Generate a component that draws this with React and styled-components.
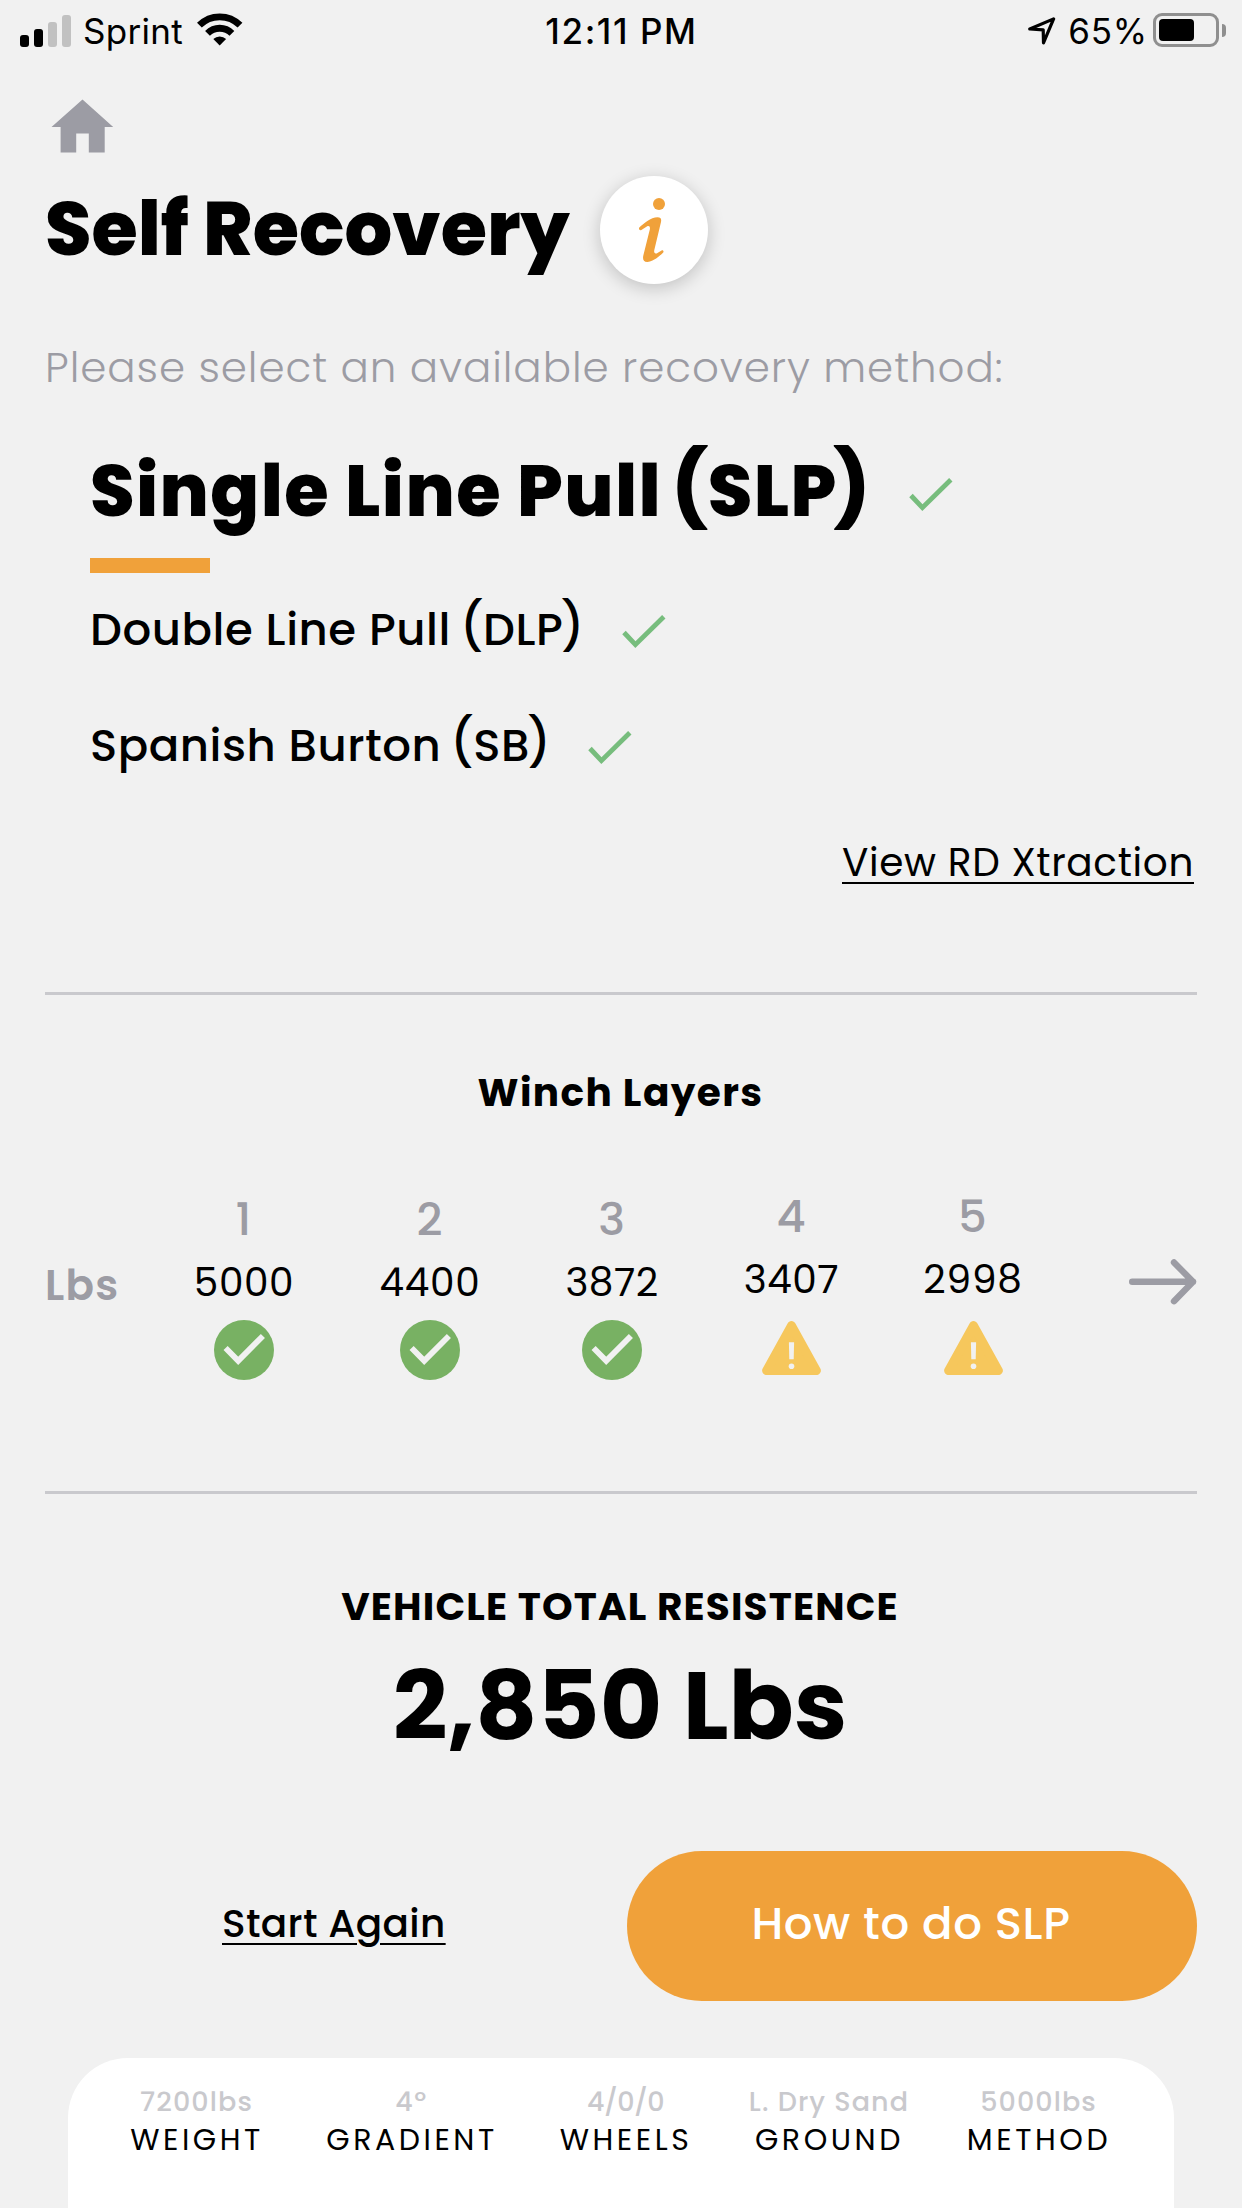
import styled, { createGlobalStyle, ThemeProvider } from 'styled-components'

const theme = {
    colors: {
        page: '#f1f1f1',
        font: '#000000',
        muted: '#9c9ca4',
        faint: '#c9c9cd',
        accent: '#f0a13a',
        tick: '#77bd7d',
        ok: '#78b163',
        warn: '#f6c75c',
    },
}

const GlobalStyle = createGlobalStyle`
    body {
        margin: 0;
        background: ${(props) => props.theme.colors.page};
        color: ${(props) => props.theme.colors.font};
        font-family: Poppins, 'Inter', sans-serif;
        font-feature-settings: 'cv11';
    }
`

const Screen = styled.div`
    display: flex;
    flex-direction: column;
    box-sizing: border-box;
    width: 1242px;
    height: 2208px;
    overflow: hidden;
`

/* text with its own tracking */
const Text = styled.span`
    letter-spacing: ${(props) => props.$track || 0}px;
    white-space: pre;
`

const StatusBar = styled.div`
    display: grid;
    grid-template-columns: 1fr auto 1fr;
    align-items: center;
    height: 62px;
    padding: 0 16px 0 20px;
    font-family: 'Inter', sans-serif;
    font-feature-settings: normal;
    font-size: 35px;
    line-height: 62px;
`

const StatusSide = styled.div`
    display: flex;
    align-items: center;
    justify-content: ${(props) => (props.$end ? 'flex-end' : 'flex-start')};
`

const Clock = styled(Text)`
    padding-right: 3px;
    font-weight: 500;
`

const Signal = styled.div`
    display: flex;
    align-items: flex-end;
    gap: 5px;
    height: 32px;
    margin-right: 12px;
`

const SignalBar = styled.div`
    width: 9px;
    height: ${(props) => props.$h}px;
    border-radius: 3px;
    background: ${(props) => (props.$on ? '#000' : '#c1c1c1')};
`

const WifiIcon = styled.svg`
    margin: 0 0 3px 14px;
`

const LocationIcon = styled.svg`
    margin-right: 12px;
`

const Battery = styled.div`
    box-sizing: border-box;
    width: 66px;
    height: 34px;
    margin: 0 0 2px 5px;
    padding: 3px;
    border: 3px solid #8f8f8f;
    border-radius: 9px;
`

const Charge = styled.div`
    width: 35px;
    height: 22px;
    border-radius: 4px;
    background: #000;
`

const BatteryTip = styled.div`
    width: 4px;
    height: 13px;
    margin: 0 0 2px 3px;
    border-radius: 0 5px 5px 0;
    background: #8f8f8f;
`

const Body = styled.div`
    display: flex;
    flex-direction: column;
    padding: 0 45px;
`

const HomeLink = styled.div`
    height: 54px;
    margin-top: 37px;
    padding-left: 6px;
`

const Header = styled.div`
    display: flex;
    align-items: center;
    gap: 30px;
    height: 108px;
    margin-top: 23px;
`

const Title = styled.h1`
    margin: 0;
    padding-bottom: 3px;
    font-size: 75px;
    font-weight: 800;
    line-height: 100px;
`

const InfoButton = styled.div`
    display: flex;
    align-items: center;
    justify-content: center;
    box-sizing: border-box;
    width: 108px;
    height: 108px;
    padding-right: 3px;
    border-radius: 50%;
    background: #fff;
    box-shadow: 0 4px 18px rgba(0, 0, 0, 0.2);
`

const Prompt = styled.div`
    height: 60px;
    margin-top: 53px;
    color: ${(props) => props.theme.colors.muted};
    font-size: 42px;
    font-weight: 300;
    line-height: 61px;
`

const Methods = styled.div`
    display: flex;
    flex-direction: column;
    padding: 53px 0 0 44px;
`

const Method = styled.div`
    display: flex;
    align-items: center;
    gap: ${(props) => (props.$active ? 38 : 37)}px;
    height: ${(props) => (props.$active ? 80 : 60)}px;
    margin-bottom: ${(props) => (props.$active ? 28 : 56)}px;
    padding-left: 1px;
    font-size: ${(props) => (props.$active ? 72 : 45)}px;
    font-weight: ${(props) => (props.$active ? 800 : 500)};
    line-height: ${(props) => (props.$active ? 81 : 61)}px;

    svg {
        margin-top: ${(props) => (props.$active ? 9 : 5)}px;
    }
`

/* brackets stand a little taller than the letters */
const Bracket = styled.span`
    margin: ${(props) => (props.$open ? '0 -0.015em 0 -0.07em' : '0 0 0 -0.05em')};
    font-size: 1.05em;
    line-height: 0;
    vertical-align: 0.03em;
`

const ActiveBar = styled.div`
    width: 120px;
    height: 15px;
    margin: 0 0 26px 1px;
    background: ${(props) => props.theme.colors.accent};
`

const Link = styled(Text)`
    font-size: 39px;
    font-weight: ${(props) => props.$weight || 400};
    line-height: 61px;
    text-decoration: underline;
    text-decoration-thickness: 2px;
    text-underline-offset: 6px;
`

const XtractionRow = styled.div`
    display: flex;
    justify-content: flex-end;
    height: 60px;
    margin-top: 1px;
    padding-right: 3px;
`

const Rule = styled.div`
    height: 3px;
    margin-top: ${(props) => props.$gap}px;
    background: ${(props) => props.theme.colors.faint};
`

const LayersTitle = styled.div`
    margin-top: 67px;
    padding-right: 1px;
    font-size: 39px;
    font-weight: 700;
    line-height: 61px;
    text-align: center;
`

const Layers = styled.div`
    display: grid;
    grid-template-columns: 106px 186px 186px 178px 181px 182px 1fr;
    align-items: start;
    height: 191px;
    margin-top: 66px;
`

const Unit = styled.div`
    margin-top: 66px;
    color: ${(props) => props.theme.colors.muted};
    font-size: 42px;
    font-weight: 600;
    line-height: 61px;
`

const Layer = styled.div`
    display: flex;
    flex-direction: column;
    align-items: center;
    margin-top: ${(props) => (props.$ok ? 0 : -3)}px;

    svg {
        margin-top: ${(props) => (props.$ok ? 7 : 11)}px;
    }
`

const LayerNumber = styled.div`
    padding-right: 1px;
    color: ${(props) => props.theme.colors.muted};
    font-size: 45px;
    font-weight: 500;
    line-height: 61px;
`

const LayerPull = styled(Text)`
    margin-top: 2px;
    font-size: 39px;
    line-height: 61px;
`

const Next = styled.div`
    display: flex;
    justify-content: flex-end;
    padding-top: 70px;
`

const Total = styled.div`
    display: flex;
    flex-direction: column;
    align-items: center;
    padding: 82px 2px 0 0;
`

const TotalLabel = styled(Text)`
    font-size: 39px;
    font-weight: 700;
    line-height: 61px;
`

const TotalValue = styled(Text)`
    margin-top: 18px;
    font-size: 96px;
    font-weight: 700;
    line-height: 101px;
`

const Actions = styled.div`
    display: flex;
    align-items: center;
    justify-content: space-between;
    height: 150px;
    margin-top: 95px;
    padding-left: 177px;
`

const StartAgain = styled(Link)`
    padding-bottom: 5px;
`

const HowTo = styled.div`
    box-sizing: border-box;
    width: 570px;
    height: 150px;
    padding-right: 2px;
    border-radius: 75px;
    background: ${(props) => props.theme.colors.accent};
    color: #fff;
    font-size: 45px;
    font-weight: 500;
    line-height: 145px;
    text-align: center;
`

const Summary = styled.div`
    display: grid;
    grid-template-columns: 198px 232px 196px 211px 208px;
    box-sizing: border-box;
    height: 150px;
    margin: 57px 68px 0;
    padding: 27px 0 0 30px;
    border-radius: 60px 60px 0 0;
    background: #fff;
`

const SummaryItem = styled.div`
    display: flex;
    flex-direction: column;
    align-items: center;
`

const SummaryValue = styled(Text)`
    padding-right: 1px;
    color: ${(props) => props.theme.colors.faint};
    font-size: 27px;
    font-weight: 500;
    line-height: 34px;
`

const SummaryLabel = styled(Text)`
    margin-top: 3px;
    font-size: 30px;
    line-height: 36px;
`

const methods = [
    { name: 'Single Line Pull', short: 'SLP', track: 1.38, active: true },
    { name: 'Double Line Pull', short: 'DLP', track: 0.56 },
    { name: 'Spanish Burton', short: 'SB', track: 0.54 },
]

const layers = [
    { pull: '5000', track: 0.6, ok: true },
    { pull: '4400', track: 0.8, ok: true },
    { pull: '3872', track: 0.45, ok: true },
    { pull: '3407', track: 0.5, ok: false },
    { pull: '2998', track: 0.8, ok: false },
]

const summary = [
    { label: 'WEIGHT', value: '7200lbs', track: 1.1 },
    { label: 'GRADIENT', value: '4º', track: 1.5 },
    { label: 'WHEELS', value: '4/0/0', track: -0.6 },
    { label: 'GROUND', value: 'L. Dry Sand', track: 1.1 },
    { label: 'METHOD', value: '5000lbs', track: 1.1 },
]

const Tick = () => (
    <svg width="44" height="34" viewBox="0 0 44 34" fill="none">
        <path d="M2 17.5L13.4 29.6L41.8 1.7" stroke={theme.colors.tick} strokeWidth="4.8" />
    </svg>
)

const OkBadge = () => (
    <svg width="60" height="60" viewBox="0 0 60 60" fill="none">
        <circle cx="30" cy="30" r="30" fill={theme.colors.ok} />
        <path d="M11.6 28L24.2 40.8L48.9 16" stroke={theme.colors.page} strokeWidth="5.8" />
    </svg>
)

const WarnBadge = () => (
    <svg width="59" height="54" viewBox="0 0 59 54">
        <path
            d="M29.5 4.6L54.4 49.6H4.6Z"
            fill={theme.colors.warn}
            stroke={theme.colors.warn}
            strokeWidth="9"
            strokeLinejoin="round"
        />
        <path d="M26.9 21.2H32.1L31.7 38.3H27.3Z" fill={theme.colors.page} />
        <circle cx="29.5" cy="45.2" r="2.8" fill={theme.colors.page} />
    </svg>
)

const InfoIcon = () => (
    <svg width="26" height="66" viewBox="0 0 26 66" fill={theme.colors.accent}>
        <circle cx="20" cy="7" r="6" />
        <path d="M0.3 30.6C4 27 12 20.3 18.5 20.3C21.8 20.3 22.6 22 22 25L15.3 53C14.8 55.5 15.6 57 17.6 56.4L22.6 53.4C24.2 52.6 25.2 54.6 24 55.8C19 60.5 13 65 8.2 65C4.6 65 3.6 62.5 4.2 59L10.8 32.5C11.3 29.8 10.4 28.4 8.2 29.2L2.4 32.9C0.8 33.8 -0.8 32 0.3 30.6Z" />
    </svg>
)

const App = () => {
    return <ThemeProvider theme={theme}>
        <GlobalStyle />
        <Screen>
            <StatusBar>
                <StatusSide>
                    <Signal>
                        <SignalBar $h={12} $on />
                        <SignalBar $h={18} $on />
                        <SignalBar $h={25} />
                        <SignalBar $h={32} />
                    </Signal>
                    <Text $track={0.29}>Sprint</Text>
                    <WifiIcon width="46" height="33" viewBox="0 0 46 33" fill="none">
                        <path d="M2.4 12.2A28.7 28.7 0 0 1 43 12.2" stroke="#000" strokeWidth="6.8" />
                        <path d="M10.5 20.3A17.3 17.3 0 0 1 34.9 20.3" stroke="#000" strokeWidth="6.8" />
                        <path d="M16.3 26.1A9 9 0 0 1 29.1 26.1L22.7 32.5Z" fill="#000" />
                    </WifiIcon>
                </StatusSide>
                <Clock $track={1.6}>12:11 PM</Clock>
                <StatusSide $end>
                    <LocationIcon width="28" height="28" viewBox="0 0 28 28" fill="none">
                        <path d="M25.6 1.9L1.8 12L15.2 12.8L15.5 25.8Z" stroke="#000" strokeWidth="3.2" strokeLinejoin="round" />
                    </LocationIcon>
                    <Text $track={0.8}>65%</Text>
                    <Battery>
                        <Charge />
                    </Battery>
                    <BatteryTip />
                </StatusSide>
            </StatusBar>

            <Body>
                <HomeLink>
                    <svg width="63" height="54" viewBox="0 0 63 54">
                        <path
                            d="M31.5 0.5L62.2 28H53.7V53.4H37.8V34.6H25.2V53.4H9.6V28H0.5Z"
                            fill={theme.colors.muted}
                        />
                    </svg>
                </HomeLink>
                <Header>
                    <Title>Self Recovery</Title>
                    <InfoButton>
                        <InfoIcon />
                    </InfoButton>
                </Header>
                <Prompt>
                    <Text $track={0.94}>Please select an available recovery method:</Text>
                </Prompt>

                <Methods>
                    {methods.map((method) => <div key={method.short}>
                        <Method $active={method.active}>
                            <Text $track={method.track}>
                                {method.name} <Bracket $open>(</Bracket>{method.short}<Bracket>)</Bracket>
                            </Text>
                            <Tick />
                        </Method>
                        {method.active && <ActiveBar />}
                    </div>)}
                </Methods>
                <XtractionRow>
                    <Link $track={0.65}>View RD Xtraction</Link>
                </XtractionRow>

                <Rule $gap={100} />
                <LayersTitle><Text $track={1.41}>Winch Layers</Text></LayersTitle>
                <Layers>
                    <Unit><Text $track={1.2}>Lbs</Text></Unit>
                    {layers.map((layer, i) => <Layer key={layer.pull} $ok={layer.ok}>
                        <LayerNumber>{i + 1}</LayerNumber>
                        <LayerPull $track={layer.track}>{layer.pull}</LayerPull>
                        {layer.ok ? <OkBadge /> : <WarnBadge />}
                    </Layer>)}
                    <Next>
                        <svg width="69" height="46" viewBox="0 0 69 46" fill="none">
                            <path
                                d="M4.2 22.8H65M46 3.4L65 22.8L46 42.2"
                                stroke={theme.colors.muted}
                                strokeWidth="6.4"
                                strokeLinecap="round"
                                strokeLinejoin="round"
                            />
                        </svg>
                    </Next>
                </Layers>

                <Rule $gap={111} />
                <Total>
                    <TotalLabel $track={1.15}>VEHICLE TOTAL RESISTENCE</TotalLabel>
                    <TotalValue>2,850 Lbs</TotalValue>
                </Total>
                <Actions>
                    <StartAgain $weight={500} $track={0.35}>Start Again</StartAgain>
                    <HowTo><Text $track={0.6}>How to do SLP</Text></HowTo>
                </Actions>
            </Body>

            <Summary>
                {summary.map((item) => <SummaryItem key={item.label}>
                    <SummaryValue $track={item.track}>{item.value}</SummaryValue>
                    <SummaryLabel $track={3.55}>{item.label}</SummaryLabel>
                </SummaryItem>)}
            </Summary>
        </Screen>
    </ThemeProvider>
}

export default App
